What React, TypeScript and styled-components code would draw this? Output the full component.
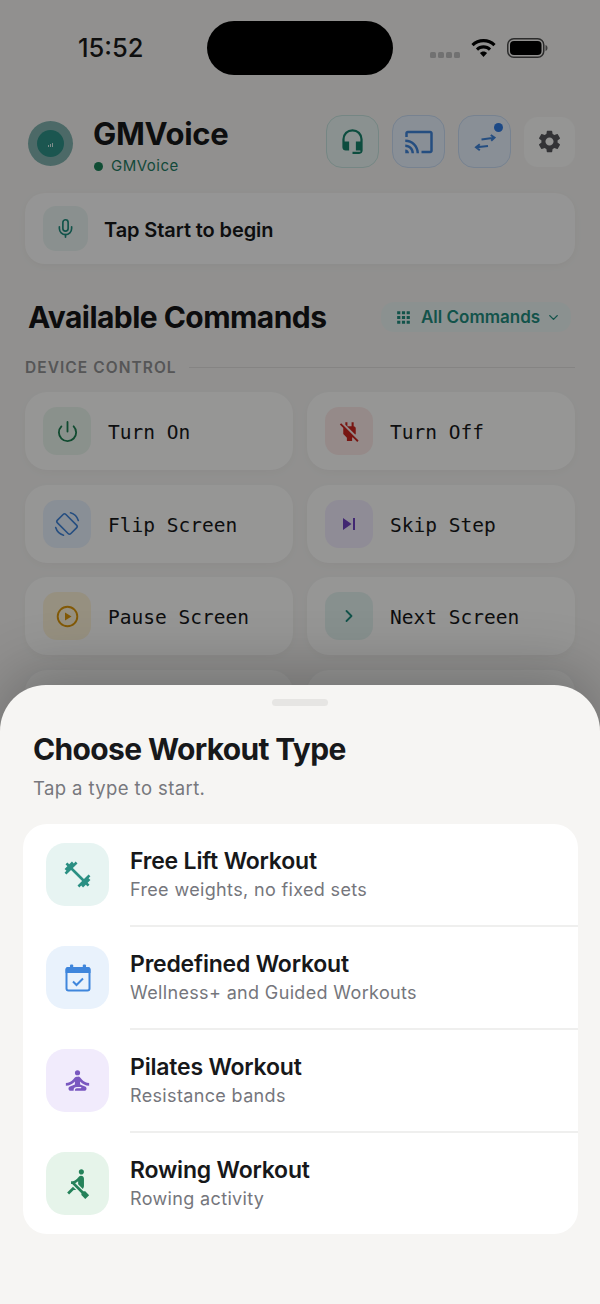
import React from "react";
import styled, { createGlobalStyle } from "styled-components";
import { ChevronDown, ChevronRight, Mic, Power } from "lucide-react";
import {
  MdApps,
  MdFitnessCenter,
  MdHeadsetMic,
  MdOutlineCast,
  MdPowerOff,
  MdRowing,
  MdSelfImprovement,
  MdSettings,
  MdSkipNext,
} from "react-icons/md";

const Global = createGlobalStyle`
  html, body { margin: 0; padding: 0; background: #f2f1ef; }
  * { box-sizing: border-box; }
  body { font-family: Inter, "Liberation Sans", sans-serif; }
`;

const Phone = styled.div`
  position: relative;
  width: 600px;
  height: 1304px;
  overflow: hidden;
  background: #f2f1ef;
  color: #1a1b1d;
`;

const StatusBar = styled.div`
  height: 96px;
  padding: 21px 52px 0 78px;
  display: flex;
  align-items: flex-start;
`;

const Time = styled.div`
  width: 129px;
  margin-top: 12px;
  font-size: 25.5px;
  line-height: 30px;
  font-weight: 500;
  color: #1a1a1a;
`;

const Island = styled.div`
  width: 186px;
  height: 54px;
  border-radius: 27px;
  background: #000;
  position: relative;
  z-index: 3;
`;

const StatusIcons = styled.div`
  flex: 1;
  display: flex;
  justify-content: flex-end;
  align-items: center;
  height: 54px;
  gap: 11px;
`;

const Signal = styled.div`
  display: flex;
  gap: 2px;
  margin-top: 14px;
`;

const SignalDot = styled.span`
  width: 6px;
  height: 6px;
  border-radius: 1.5px;
  background: #bdbdbd;
`;

const Header = styled.div`
  height: 97px;
  padding: 20px 25px 0 28px;
  display: flex;
  align-items: flex-start;
`;

const Avatar = styled.div`
  width: 45px;
  height: 45px;
  margin-top: 5px;
  border-radius: 50%;
  background: #7fb0ac;
  display: flex;
  align-items: center;
  justify-content: center;
  flex: none;
`;

const AvatarCore = styled.div`
  width: 27px;
  height: 27px;
  border-radius: 50%;
  background: #2e8f86;
  display: flex;
  align-items: flex-end;
  justify-content: center;
  gap: 1px;
  padding-bottom: 10px;
`;

const Tick = styled.span<{ $h: number }>`
  width: 1.2px;
  height: ${(p) => p.$h}px;
  background: #d6ece9;
`;

const Brand = styled.div`
  margin-left: 20px;
  flex: 1;
`;

const BrandName = styled.div`
  font-size: 31px;
  line-height: 36px;
  font-weight: 700;
  letter-spacing: -0.3px;
  color: #17181a;
`;

const BrandSub = styled.div`
  margin-top: 5px;
  display: flex;
  align-items: center;
  gap: 8px;
  margin-left: 1px;
  font-size: 15px;
  line-height: 18px;
  font-weight: 400;
  letter-spacing: 0.5px;
  color: #1f7a62;
`;

const LiveDot = styled.span`
  width: 9px;
  height: 9px;
  border-radius: 50%;
  background: #1b8058;
`;

const Actions = styled.div`
  display: flex;
  align-items: center;
  margin-top: -1px;
  gap: 13px;
`;

const HeadButton = styled.div<{ $bg: string; $line: string; $fg: string }>`
  position: relative;
  width: 53px;
  height: 53px;
  border-radius: 16px;
  background: ${(p) => p.$bg};
  border: 1.5px solid ${(p) => p.$line};
  color: ${(p) => p.$fg};
  display: flex;
  align-items: center;
  justify-content: center;
`;

const GearButton = styled.div`
  width: 51px;
  height: 50px;
  border-radius: 14px;
  background: #f8f8f7;
  color: #55565b;
  display: flex;
  align-items: center;
  justify-content: center;
`;

const Badge = styled.span`
  position: absolute;
  top: 7px;
  right: 7px;
  width: 9px;
  height: 9px;
  border-radius: 50%;
  background: #2f7ae0;
`;

const Prompt = styled.div`
  margin: 0 25px;
  height: 71px;
  border-radius: 20px;
  background: #f9f9f8;
  display: flex;
  align-items: center;
  padding-left: 18px;
  gap: 16px;
  box-shadow: 0 2px 8px rgba(0, 0, 0, 0.04);
`;

const PromptIcon = styled.div`
  width: 45px;
  height: 45px;
  border-radius: 13px;
  background: #e6f1ef;
  color: #1f8a7c;
  display: flex;
  align-items: center;
  justify-content: center;
`;

const PromptText = styled.div`
  font-size: 20px;
  line-height: 26px;
  padding-top: 2px;
  font-weight: 600;
  letter-spacing: -0.1px;
  color: #17181a;
`;

const SectionHead = styled.div`
  margin: 38px 29px 0 28px;
  height: 30px;
  display: flex;
  justify-content: space-between;
  align-items: center;
`;

const SectionTitle = styled.div`
  font-size: 30px;
  line-height: 30px;
  margin-top: -1px;
  font-weight: 700;
  letter-spacing: -0.55px;
  color: #141517;
`;

const FilterPill = styled.div`
  width: 190px;
  height: 30px;
  border-radius: 13px;
  background: #e8f2f0;
  color: #1f8a7c;
  display: flex;
  align-items: center;
  padding-left: 13px;
  gap: 8px;
  font-size: 17px;
  font-weight: 600;
`;

const PillChevron = styled(ChevronDown)`
  margin-left: -2px;
`;

const GroupLabel = styled.div`
  margin: 25px 25px 0;
  height: 20px;
  display: flex;
  align-items: center;
  gap: 12px;
  font-size: 15.5px;
  font-weight: 600;
  letter-spacing: 1.05px;
  color: #8f8f91;
  &::after {
    content: "";
    flex: 1;
    height: 1px;
    background: #deddda;
  }
`;

const CommandGrid = styled.div`
  margin: 15px 25px 0;
  display: grid;
  grid-template-columns: 268px 268px;
  grid-auto-rows: 78px;
  column-gap: 14px;
  row-gap: 14.6px;
`;

const CommandCard = styled.div`
  border-radius: 22px;
  background: #fafaf9;
  display: flex;
  align-items: center;
  padding-left: 18px;
  gap: 17px;
  box-shadow: 0 3px 10px rgba(0, 0, 0, 0.03);
`;

const CommandIcon = styled.div<{ $bg: string; $fg: string }>`
  width: 48px;
  height: 48px;
  border-radius: 14px;
  background: ${(p) => p.$bg};
  color: ${(p) => p.$fg};
  display: flex;
  align-items: center;
  justify-content: center;
`;

const CommandLabel = styled.div`
  font-family: "DejaVu Sans Mono", "Liberation Mono", monospace;
  font-size: 19.5px;
  line-height: 24px;
  padding-top: 4px;
  color: #17181a;
`;

const Scrim = styled.div`
  position: absolute;
  inset: 0;
  background: rgba(0, 0, 0, 0.4);
  z-index: 2;
`;

const Sheet = styled.div`
  position: absolute;
  left: 0;
  right: 0;
  bottom: 0;
  height: 619px;
  z-index: 4;
  background: #f6f5f3;
  border-radius: 46px 46px 0 0;
  padding: 14px 22px 0 23px;
  box-shadow: 0 -14px 60px rgba(0, 0, 0, 0.24);
`;

const Handle = styled.div`
  width: 56px;
  height: 7px;
  border-radius: 4px;
  background: #e6e5e3;
  margin: 0 auto 0 249px;
`;

const SheetTitle = styled.div`
  margin: 25px 0 0 10px;
  font-size: 30px;
  line-height: 36px;
  font-weight: 700;
  letter-spacing: -0.65px;
  color: #17181a;
`;

const SheetSub = styled.div`
  margin: 9px 0 0 10px;
  font-size: 18.5px;
  line-height: 24px;
  letter-spacing: 0.4px;
  color: #77787d;
`;

const OptionList = styled.div`
  margin-top: 24px;
  height: 410px;
  background: #fff;
  border-radius: 24px;
  overflow: hidden;
`;

const OptionRow = styled.div`
  height: 103px;
  display: flex;
  align-items: center;
  padding-left: 23px;
  gap: 21px;
`;

const OptionIcon = styled.div<{ $bg: string; $fg: string }>`
  width: 63px;
  height: 63px;
  margin-bottom: 2px;
  flex: none;
  border-radius: 19px;
  background: ${(p) => p.$bg};
  color: ${(p) => p.$fg};
  display: flex;
  align-items: center;
  justify-content: center;
`;

const OptionBody = styled.div<{ $last: boolean }>`
  flex: 1;
  height: 100%;
  display: flex;
  flex-direction: column;
  justify-content: center;
  border-bottom: 2px solid ${(p) => (p.$last ? "transparent" : "#efefee")};
  padding-bottom: 2px;
`;

const OptionTitle = styled.div`
  font-size: 23px;
  line-height: 29px;
  font-weight: 600;
  letter-spacing: -0.2px;
  color: #17181a;
`;

const OptionSub = styled.div`
  margin-top: 2px;
  font-size: 18px;
  line-height: 23px;
  letter-spacing: 0.35px;
  color: #75767c;
`;

const SwapIcon = () => (
  <svg width="28" height="28" viewBox="0 0 28 28" fill="none" stroke="currentColor" strokeWidth="2">
    <path d="M10.500 11.500 L23 9.800 M19.800 7 L23.500 9.700 L20.200 12.700" />
    <path d="M17 18 L5.500 19.300 M8.800 16.300 L5 19.300 L8.800 22.300" />
  </svg>
);

const WifiIcon = () => (
  <svg width="25" height="19" viewBox="0 0 25 19" fill="#000">
    <path d="M12.5 0C7.8 0 3.6 1.8.4 4.9l2.2 2.4C5.2 4.8 8.7 3.3 12.5 3.3s7.3 1.5 9.9 4l2.2-2.4C21.4 1.8 17.2 0 12.5 0z" />
    <path d="M12.5 6.3c-2.9 0-5.6 1.1-7.6 3.1l2.2 2.4c1.4-1.4 3.3-2.2 5.4-2.2s4 .8 5.4 2.2l2.2-2.4c-2-2-4.7-3.1-7.6-3.1z" />
    <path d="M12.5 12.4c-1.4 0-2.7.6-3.6 1.5l3.6 4.1 3.6-4.1c-.9-.9-2.2-1.5-3.6-1.5z" />
  </svg>
);

const BatteryIcon = () => (
  <svg width="41" height="20" viewBox="0 0 41 20">
    <rect x="0.75" y="0.75" width="36" height="18.5" rx="6" fill="none" stroke="#4a4a4a" strokeWidth="1.5" />
    <rect x="3" y="3" width="31.5" height="14" rx="4" fill="#000" />
    <path d="M38.5 7 C40 7.6 40.5 8.6 40.5 10 C40.5 11.4 40 12.4 38.5 13z" fill="#666" />
  </svg>
);

const CalendarIcon = () => (
  <svg width="26" height="28" viewBox="0 0 26 28" fill="currentColor">
    <rect x="5" y="0.5" width="3.2" height="5" rx="1" />
    <rect x="17.800" y="0.5" width="3.2" height="5" rx="1" />
    <path d="M3 3h20a2.500 2.500 0 0 1 2.500 2.500v3.500H.5V5.500A2.500 2.500 0 0 1 3 3z" />
    <rect x="1.500" y="4" width="23" height="22.500" rx="2" fill="none" stroke="currentColor" strokeWidth="2" />
    <path d="M8 17.500l3.500 3.500 6.500-6.500" fill="none" stroke="currentColor" strokeWidth="2" />
  </svg>
);

const FlipIcon = () => (
  <svg width="28" height="28" viewBox="0 0 28 28" fill="none" stroke="currentColor" strokeWidth="1.600" strokeLinecap="round">
    <rect x="8" y="4.500" width="12" height="19" rx="2" transform="rotate(-45 14 14)" />
    <path d="M17.500 2.800 A11.500 11.500 0 0 1 25.300 10.500" />
    <path d="M2.700 17.500 A11.500 11.500 0 0 0 10.500 25.200" />
  </svg>
);

const PausePlayIcon = () => (
  <svg width="23" height="23" viewBox="0 0 23 23" fill="none" stroke="currentColor" strokeWidth="1.900">
    <circle cx="11.500" cy="11.500" r="9.800" />
    <path d="M9 7.500 L15.500 11.500 L9 15.500z" fill="currentColor" stroke="none" />
  </svg>
);

const commands = [
  { label: "Turn On", bg: "#e6f2ea", fg: "#1d7d50", icon: <Power size={23} strokeWidth={1.9} /> },
  { label: "Turn Off", bg: "#f9e6e4", fg: "#c9261f", icon: <MdPowerOff size={25} /> },
  { label: "Flip Screen", bg: "#e5eefa", fg: "#3f82d6", icon: <FlipIcon /> },
  { label: "Skip Step", bg: "#efe9fb", fg: "#6e42bf", icon: <MdSkipNext size={24} /> },
  { label: "Pause Screen", bg: "#fbf0d6", fg: "#d9950a", icon: <PausePlayIcon /> },
  { label: "Next Screen", bg: "#e2f0ed", fg: "#1f8a7c", icon: <ChevronRight size={20} strokeWidth={2.2} /> },
  { label: "", bg: "transparent", fg: "transparent", icon: null },
  { label: "", bg: "transparent", fg: "transparent", icon: null },
];

const options = [
  {
    title: "Free Lift Workout",
    sub: "Free weights, no fixed sets",
    bg: "#e7f4f2",
    fg: "#2a8f83",
    icon: <MdFitnessCenter size={31} />,
  },
  { title: "Predefined Workout", sub: "Wellness+ and Guided Workouts", bg: "#e9f2fc", fg: "#3f86dc", icon: <CalendarIcon /> },
  { title: "Pilates Workout", sub: "Resistance bands", bg: "#f1ebfc", fg: "#7a58c0", icon: <MdSelfImprovement size={31} /> },
  { title: "Rowing Workout", sub: "Rowing activity", bg: "#e6f4ea", fg: "#25825a", icon: <MdRowing size={31} /> },
];

export default function App() {
  return (
    <>
      <Global />
      <Phone>
        <StatusBar>
          <Time>15:52</Time>
          <Island />
          <StatusIcons>
            <Signal>
              <SignalDot />
              <SignalDot />
              <SignalDot />
              <SignalDot />
            </Signal>
            <WifiIcon />
            <BatteryIcon />
          </StatusIcons>
        </StatusBar>

        <Header>
          <Avatar>
            <AvatarCore>
              <Tick $h={2} />
              <Tick $h={3} />
              <Tick $h={4} />
            </AvatarCore>
          </Avatar>
          <Brand>
            <BrandName>GMVoice</BrandName>
            <BrandSub>
              <LiveDot />
              GMVoice
            </BrandSub>
          </Brand>
          <Actions>
            <HeadButton $bg="#e6f2f0" $line="#c4e0dc" $fg="#17806a">
              <MdHeadsetMic size={27} />
            </HeadButton>
            <HeadButton $bg="#e5eefa" $line="#c6d9f0" $fg="#3f82d6">
              <MdOutlineCast size={30} />
            </HeadButton>
            <HeadButton $bg="#e5eefa" $line="#c6d9f0" $fg="#3f82d6">
              <SwapIcon />
              <Badge />
            </HeadButton>
            <GearButton>
              <MdSettings size={27} />
            </GearButton>
          </Actions>
        </Header>

        <Prompt>
          <PromptIcon>
            <Mic size={21} strokeWidth={1.9} />
          </PromptIcon>
          <PromptText>Tap Start to begin</PromptText>
        </Prompt>

        <SectionHead>
          <SectionTitle>Available Commands</SectionTitle>
          <FilterPill>
            <MdApps size={19} />
            All Commands
            <PillChevron size={15} strokeWidth={2.2} />
          </FilterPill>
        </SectionHead>

        <GroupLabel>DEVICE CONTROL</GroupLabel>

        <CommandGrid>
          {commands.map((c, i) => (
            <CommandCard key={i}>
              {c.icon && (
                <CommandIcon $bg={c.bg} $fg={c.fg}>
                  {c.icon}
                </CommandIcon>
              )}
              {c.label && <CommandLabel>{c.label}</CommandLabel>}
            </CommandCard>
          ))}
        </CommandGrid>

        <Scrim />

        <Sheet>
          <Handle />
          <SheetTitle>Choose Workout Type</SheetTitle>
          <SheetSub>Tap a type to start.</SheetSub>
          <OptionList>
            {options.map((o, i) => (
              <OptionRow key={o.title}>
                <OptionIcon $bg={o.bg} $fg={o.fg}>
                  {o.icon}
                </OptionIcon>
                <OptionBody $last={i === options.length - 1}>
                  <OptionTitle>{o.title}</OptionTitle>
                  <OptionSub>{o.sub}</OptionSub>
                </OptionBody>
              </OptionRow>
            ))}
          </OptionList>
        </Sheet>
      </Phone>
    </>
  );
}
